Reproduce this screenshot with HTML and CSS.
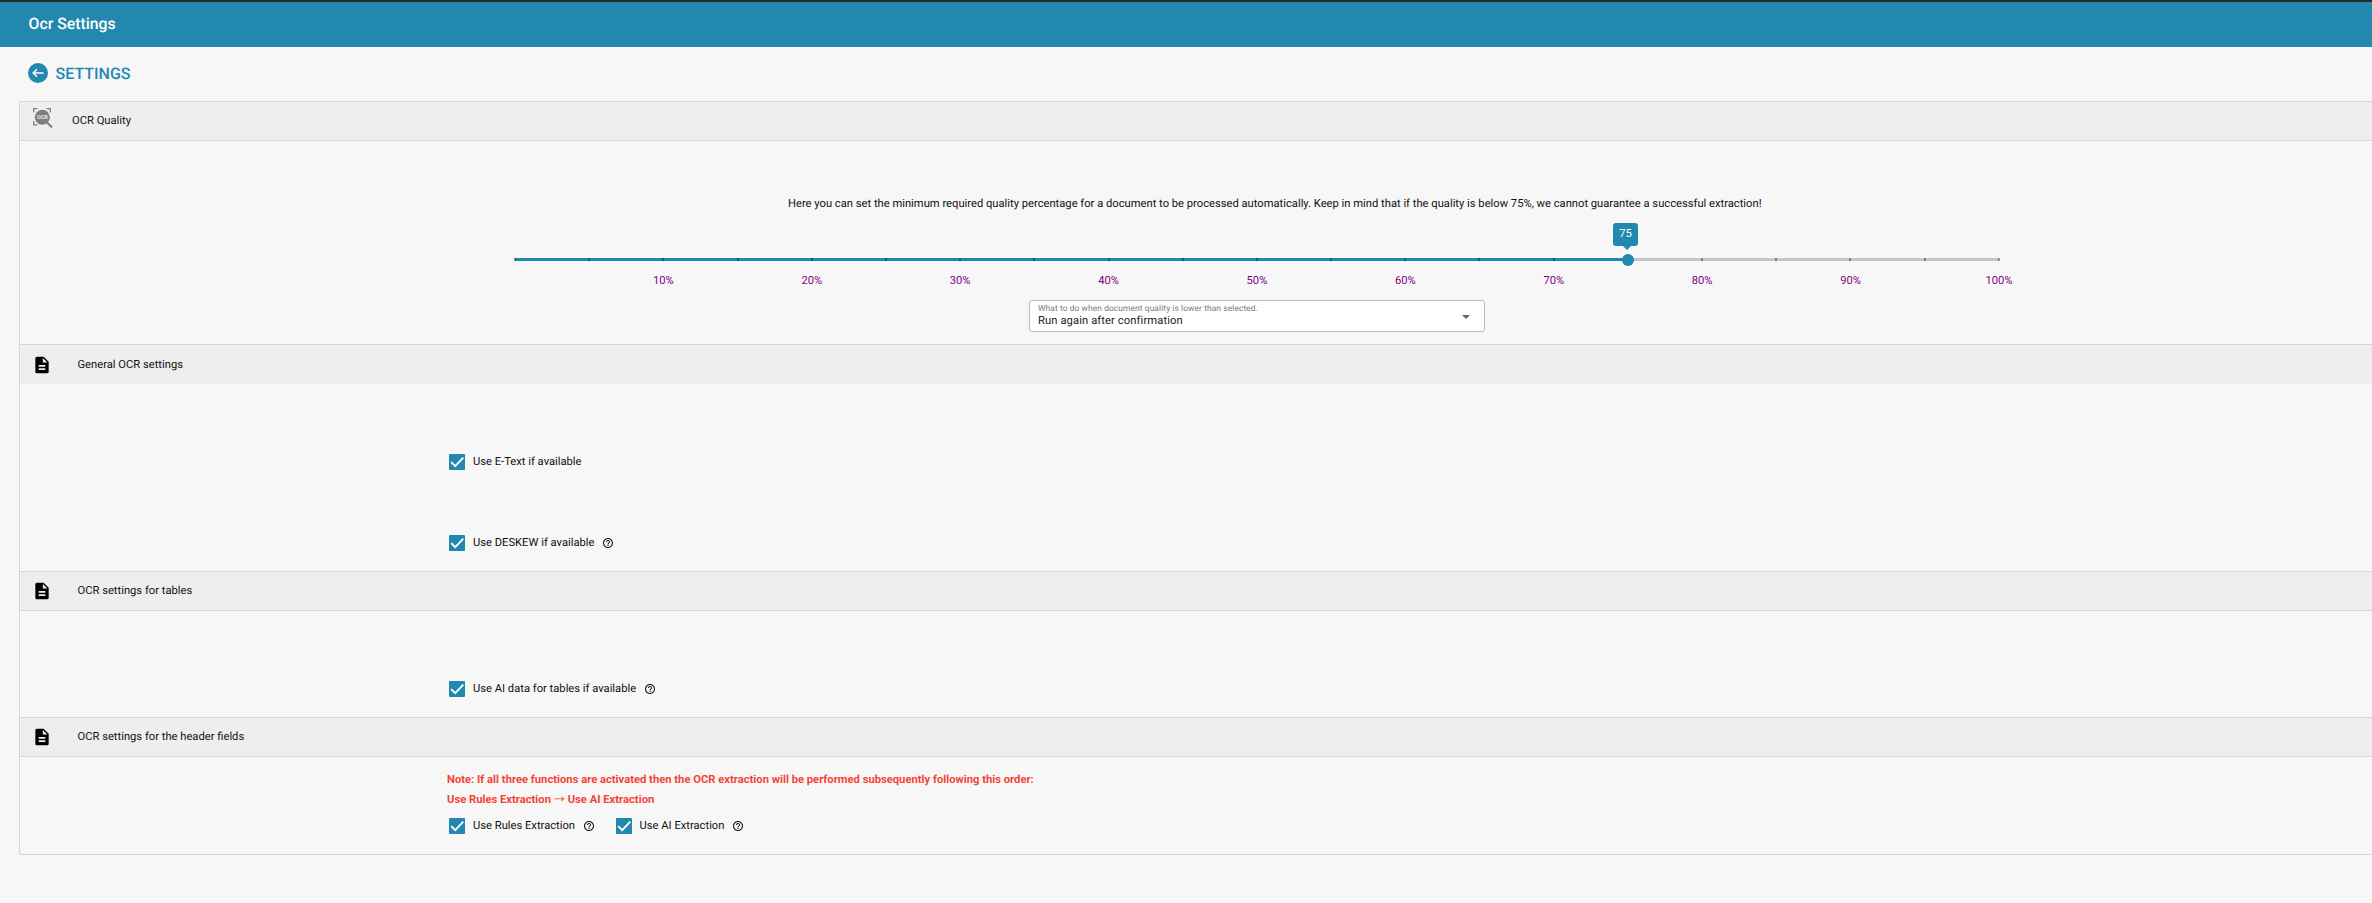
FILE: index.html
```html
<!DOCTYPE html>
<html lang="en">
<head>
<meta charset="utf-8">
<title>Ocr Settings</title>
<link rel="stylesheet" href="styles.css">
</head>
<body>
<svg class="defs" width="0" height="0">
  <symbol id="doc" viewBox="0 0 24 24"><path d="M14 2H6c-1.100 0-2 .9-2 2v16c0 1.100.9 2 2 2h12c1.100 0 2-.9 2-2V8l-6-6zm2 16H8v-2h8v2zm0-4H8v-2h8v2zm-3-5V3.500L18.500 9H13z"/></symbol>
  <symbol id="help" viewBox="0 0 24 24"><path d="M11 18h2v-2h-2v2zm1-16C6.480 2 2 6.480 2 12s4.480 10 10 10 10-4.480 10-10S17.520 2 12 2zm0 18c-4.410 0-8-3.590-8-8s3.590-8 8-8 8 3.590 8 8-3.590 8-8 8zm0-14c-2.210 0-4 1.790-4 4h2c0-1.100.9-2 2-2s2 .9 2 2c0 2-3 1.750-3 5h2c0-2.250 3-2.500 3-5 0-2.210-1.790-4-4-4z"/></symbol>
  <symbol id="check" viewBox="0 0 16 16"><path d="M2.200 8.100 6.200 12.200 14.300 3.700" fill="none" stroke="#fff" stroke-width="1.900"/></symbol>
</svg>
<header class="topbar">Ocr Settings</header>
<div class="page-title">
  <svg class="back" viewBox="0 0 20 20"><circle cx="10" cy="10" r="10" fill="#2288af"/><path d="M15.500 10H5.500M9 6.200 5.200 10 9 13.800" fill="none" stroke="#fff" stroke-width="1.500"/></svg>
  <h1>SETTINGS</h1>
</div>
<main class="panel">
  <section class="quality">
    <div class="section-head first">
      <svg class="ocr-icon" viewBox="0 0 20 20"><g fill="none" stroke="#808080" stroke-width="1.300"><path d="M.7 4.500V.7H4.500M13.500 .7H17.300V4.500M.7 13V16.800H4.500"/><path d="M14 14.500 19 19.300" stroke-width="2.200"/></g><circle cx="9.300" cy="9.300" r="7.500" fill="#7d7d7d"/><text x="9.400" y="11.200" class="ocr-text">OCR</text></svg>
      <span>OCR Quality</span>
    </div>
    <div class="quality-body">
      <p class="hint">Here you can set the minimum required quality percentage for a document to be processed automatically. Keep in mind that if the quality is below 75%, we cannot guarantee a successful extraction!</p>
      <div class="slider">
        <div class="track"><div class="fill" style="width:75%"></div><div class="ticks"><i></i><i></i><i></i><i></i><i></i><i></i><i></i><i></i><i></i><i></i><i></i><i></i><i></i><i></i><i></i><i></i><i></i><i></i><i></i><i></i><i></i></div>
          <div class="thumb" style="left:75%"><span class="bubble">75</span></div>
        </div>
        <div class="scale"><span>10%</span><span>20%</span><span>30%</span><span>40%</span><span>50%</span><span>60%</span><span>70%</span><span>80%</span><span>90%</span><span>100%</span></div>
      </div>
      <div class="select">
        <div class="select-text"><div class="select-label">What to do when document quality is lower than selected.</div><div class="select-value">Run again after confirmation</div></div>
        <i class="arrow"></i>
      </div>
    </div>
  </section>
  <section class="general">
    <div class="section-head open"><svg class="doc"><use href="#doc"/></svg><span>General OCR settings</span></div>
    <div class="body general-body">
      <div class="option"><span class="box"><svg><use href="#check"/></svg></span><span>Use E-Text if available</span></div>
      <div class="option"><span class="box"><svg><use href="#check"/></svg></span><span>Use DESKEW if available</span><svg class="help"><use href="#help"/></svg></div>
    </div>
  </section>
  <section class="tables">
    <div class="section-head"><svg class="doc"><use href="#doc"/></svg><span>OCR settings for tables</span></div>
    <div class="body tables-body">
      <div class="option"><span class="box"><svg><use href="#check"/></svg></span><span>Use AI data for tables if available</span><svg class="help"><use href="#help"/></svg></div>
    </div>
  </section>
  <section class="fields">
    <div class="section-head"><svg class="doc"><use href="#doc"/></svg><span>OCR settings for the header fields</span></div>
    <div class="body">
      <p class="note">Note: If all three functions are activated then the OCR extraction will be performed subsequently following this order:<br>Use Rules Extraction <span class="to">→</span> Use AI Extraction</p>
      <div class="row">
        <div class="option"><span class="box"><svg><use href="#check"/></svg></span><span>Use Rules Extraction</span><svg class="help"><use href="#help"/></svg></div>
        <div class="option"><span class="box"><svg><use href="#check"/></svg></span><span>Use AI Extraction</span><svg class="help"><use href="#help"/></svg></div>
      </div>
    </div>
  </section>
</main>
</body>
</html>
```
FILE: styles.css
```css
* { box-sizing: border-box; }
body { margin: 0; height: 903px; overflow: hidden; background: #f7f7f7; color: #111; font: 11.2px/16px Roboto, sans-serif; text-rendering: geometricPrecision; }
h1, p { margin: 0; }
.defs { display: none; }
svg { display: block; flex: none; }
.topbar { height: 47px; border-top: 2px solid #2a2a2a; background: #2288af; color: #fff; padding-left: 28.500px; font-size: 15.800px; font-weight: 500; line-height: 44px; }
.page-title { height: 54px; display: flex; align-items: center; padding-left: 28px; gap: 7.500px; color: #2288af; }
.page-title h1 { font-size: 16px; font-weight: 500; }
.back { width: 20px; height: 20px; margin-top: -2px; }
.panel { margin-left: 19px; height: 754px; border: 1px solid #d6d6d6; border-right: 0; border-radius: 3px 0 0 3px; }
.section-head { height: 40px; display: flex; align-items: center; background: #eee; border: solid #d6d6d6; border-width: 1px 0; padding-left: 12px; }
.section-head.first { height: 39px; border-top: 0; }
.section-head.open { border-bottom: 0; }
.section-head .doc { width: 20px; height: 20px; fill: #000; margin-right: 25.500px; }
.ocr-icon { width: 20px; height: 20px; margin: -6px 19px 0 1px; }
.ocr-text { font: bold 5.500px Roboto, sans-serif; fill: #eee; text-anchor: middle; }
.quality { height: 242px; }
.general { height: 227px; }
.tables { height: 146px; }
.quality-body { display: flex; flex-direction: column; align-items: flex-start; padding-top: 55px; }
.hint { margin-left: 768px; white-space: nowrap; }
.slider { width: 1484px; margin-top: 46px; margin-left: 495px; }
.track { height: 3px; background: #c6c6c6; position: relative; }
.fill { height: 3px; background: #2288af; }
.ticks { position: absolute; inset: 0 -1px; display: flex; justify-content: space-between; }
.ticks i { width: 2px; height: 3px; background: rgba(0,0,0,.35); }
.thumb { position: absolute; top: -4px; width: 12px; height: 12px; margin-left: -6px; border-radius: 50%; background: #2288af; }
.bubble { position: absolute; left: -9px; bottom: 20px; width: 25px; height: 23px; border-radius: 3px; background: #2288af; color: #fff; text-align: center; line-height: 21px; }
.bubble::after { content: ""; position: absolute; left: 10px; top: 23px; border: 4px solid transparent; border-top-color: #2288af; border-bottom: 0; }
.scale { display: grid; grid-template-columns: repeat(10, 1fr); margin: 12px -74.200px 0 74.200px; text-align: center; color: #800080; }
.select { width: 456px; height: 32px; margin: 11px 0 0 1009px; border: 1px solid #bcbcbc; border-radius: 3px; background: #fff; display: flex; justify-content: space-between; align-items: center; padding: 0 14.500px 0 8px; letter-spacing: .1px; }
.select-label { font-size: 8.400px; line-height: 11px; color: #777; }
.select-value { line-height: 12px; color: #222; padding-bottom: 1px; }
.arrow { border: 4px solid transparent; border-top-color: #666; border-bottom: 0; margin-top: 2px; }
.body { padding-left: 427px; }
.option { display: flex; align-items: center; height: 16px; margin-left: 2px; }
.box { width: 16px; height: 16px; border-radius: 1px; background: #2288af; margin-right: 8px; }
.box svg { width: 16px; height: 16px; }
.box + span { margin-top: -1px; }
.help { width: 12px; height: 12px; fill: #111; margin: -1px 0 0 7.500px; }
.general-body { padding-top: 70px; display: grid; gap: 65px; }
.tables-body { padding-top: 70px; }
.note { padding-top: 13px; color: #f44336; font-weight: 700; line-height: 20px; letter-spacing: .01px; }
.to { font-family: "Noto Sans CJK JP", sans-serif; font-weight: 400; line-height: 1; }
.row { display: flex; gap: 19px; padding-top: 8px; }
```
